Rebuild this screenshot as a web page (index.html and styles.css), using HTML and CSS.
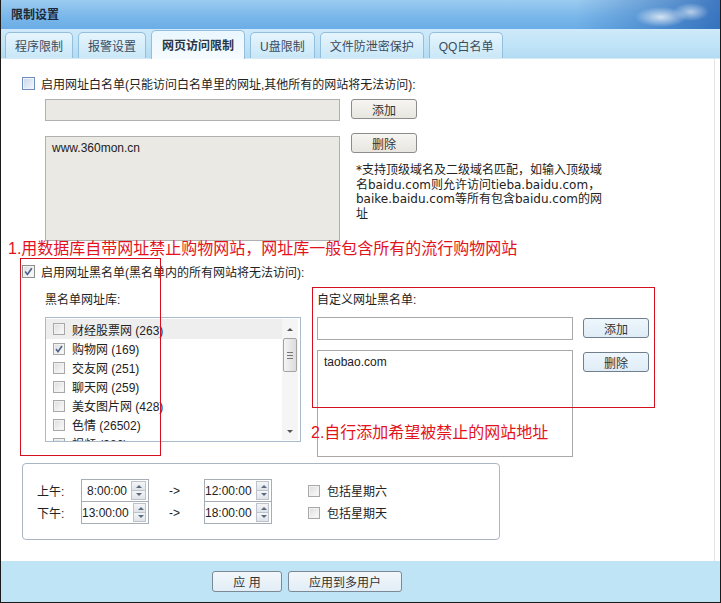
FILE: index.html
```html
<!DOCTYPE html>
<html lang="zh-CN">
<head>
    <meta charset="UTF-8">
    <title>限制设置</title>
    <link rel="stylesheet" href="styles.css">
</head>
<body>
<div class="window">
    <div class="titlebar">限制设置</div>

    <div class="tabstrip">
        <div class="tab">程序限制</div>
        <div class="tab">报警设置</div>
        <div class="tab active">网页访问限制</div>
        <div class="tab">U盘限制</div>
        <div class="tab">文件防泄密保护</div>
        <div class="tab">QQ白名单</div>
    </div>

    <div class="panel">
        <div class="check-row">
            <span class="cb cb-blue"></span>
            <span>启用网址白名单(只能访问白名单里的网址,其他所有的网站将无法访问):</span>
        </div>

        <div class="wl-body">
            <div class="wl-fields">
                <div class="field disabled"></div>
                <div class="area disabled wl-area">www.360mon.cn</div>
            </div>
            <div class="wl-side">
                <button class="btn btn-grey">添加</button>
                <button class="btn btn-grey btn-del">删除</button>
                <p class="note">*支持顶级域名及二级域名匹配，如输入顶级域名baidu.com则允许访问tieba.baidu.com，baike.baidu.com等所有包含baidu.com的网址</p>
            </div>
        </div>

        <div class="check-row bl-head">
            <span class="cb checked">
                <svg viewBox="0 0 11 11" width="11" height="11"><path d="M2.2 5.6 L4.4 8.4 L8.8 2.2" fill="none" stroke="#4a5e88" stroke-width="1.6"/></svg>
            </span>
            <span>启用网址黑名单(黑名单内的所有网站将无法访问):</span>
        </div>

        <div class="bl-body">
            <div class="bl-lib">
                <div class="caption">黑名单网址库:</div>
                <div class="listbox">
                    <div class="list-items">
                        <div class="item selected"><span class="cb cb-sm"></span>财经股票网 (263)</div>
                        <div class="item"><span class="cb cb-sm checked">
                            <svg viewBox="0 0 10 10" width="10" height="10"><path d="M2 5 L4 7.8 L8 2" fill="none" stroke="#4a5e88" stroke-width="1.5"/></svg>
                        </span>购物网 (169)</div>
                        <div class="item"><span class="cb cb-sm"></span>交友网 (251)</div>
                        <div class="item"><span class="cb cb-sm"></span>聊天网 (259)</div>
                        <div class="item"><span class="cb cb-sm"></span>美女图片网 (428)</div>
                        <div class="item"><span class="cb cb-sm"></span>色情 (26502)</div>
                        <div class="item"><span class="cb cb-sm"></span>视频 (386)</div>
                    </div>
                    <div class="scrollbar">
                        <span class="arrow arrow-up"></span>
                        <span class="thumb"><i></i><i></i><i></i></span>
                        <span class="arrow arrow-down"></span>
                    </div>
                </div>
            </div>

            <div class="bl-custom">
                <div class="caption">自定义网址黑名单:</div>
                <div class="custom-grid">
                    <div class="custom-fields">
                        <div class="field"></div>
                        <div class="area bl-area">taobao.com</div>
                    </div>
                    <div class="custom-side">
                        <button class="btn btn-blue">添加</button>
                        <button class="btn btn-blue btn-del2">删除</button>
                    </div>
                </div>
            </div>
        </div>

        <div class="timebox">
            <div class="time-row">
                <span class="time-label">上午:</span>
                <div class="spin"><span class="spin-val">8:00:00</span><span class="spin-btns"><i class="up"></i><i class="down"></i></span></div>
                <span class="time-arrow">-&gt;</span>
                <div class="spin"><span class="spin-val">12:00:00</span><span class="spin-btns"><i class="up"></i><i class="down"></i></span></div>
                <span class="cb cb-sm time-cb"></span><span>包括星期六</span>
            </div>
            <div class="time-row">
                <span class="time-label">下午:</span>
                <div class="spin"><span class="spin-val">13:00:00</span><span class="spin-btns"><i class="up"></i><i class="down"></i></span></div>
                <span class="time-arrow">-&gt;</span>
                <div class="spin"><span class="spin-val">18:00:00</span><span class="spin-btns"><i class="up"></i><i class="down"></i></span></div>
                <span class="cb cb-sm time-cb"></span><span>包括星期天</span>
            </div>
        </div>
    </div>

    <div class="footer">
        <button class="btn btn-foot btn-apply">应 用</button>
        <button class="btn btn-foot btn-multi">应用到多用户</button>
    </div>

    <!-- annotations drawn over the screenshot -->
    <div class="note-red note-red1">1.用数据库自带网址禁止购物网站，网址库一般包含所有的流行购物网站</div>
    <div class="mark mark1"></div>
    <div class="mark mark2"></div>
    <div class="note-red note-red2">2.自行添加希望被禁止的网站地址</div>
</div>
</body>
</html>
```

FILE: styles.css
```css
body {
    margin: 0;
    background: #fff;
    font-family: "Liberation Sans", "Noto Sans CJK SC", sans-serif;
    font-size: 12px;
    color: #222;
}
.window {
    position: relative;
    width: 721px;
    height: 603px;
    box-sizing: border-box;
    border: 1px solid #1b1b1b;
    border-top: none;
    display: flex;
    flex-direction: column;
    overflow: hidden;
}
.titlebar {
    height: 29px;
    line-height: 30px;
    padding-left: 10px;
    font-weight: bold;
    color: #1c2838;
    background:
        radial-gradient(ellipse 26px 10px at 660px 17px, rgba(255,255,255,.75), rgba(255,255,255,0)),
        radial-gradient(ellipse 18px 9px at 690px 12px, rgba(255,255,255,.6), rgba(255,255,255,0)),
        linear-gradient(to right, rgba(40,100,180,0) 80%, rgba(40,100,180,.8) 100%),
        linear-gradient(#9ccbf0, #78b6e9 60%, #6badE6);
}
.tabstrip {
    height: 29px;
    display: flex;
    align-items: flex-end;
    gap: 5px;
    padding-left: 4px;
    background: linear-gradient(#cfeafa, #bfe3f7 60%, #b2dbf3);
    border-bottom: 1px solid #d7e9f4;
}
.tab {
    height: 26px;
    line-height: 28px;
    padding: 0 9px;
    box-sizing: border-box;
    border: 1px solid #93bedc;
    border-bottom: none;
    border-radius: 5px 5px 0 0;
    background: linear-gradient(#e6f5fd, #c9e7f7);
    color: #3b4b5e;
}
.tab.active {
    height: 29px;
    line-height: 30px;
    padding: 0 10px;
    margin-bottom: -1px;
    font-weight: bold;
    color: #2a3646;
    background: linear-gradient(#eaf7fe, #f6fbfe);
}
.panel {
    flex: 1;
    padding: 15px 0 0 21px;
    border-right: 1px solid #e4e4e4;
    margin-right: 5px;
}
.check-row {
    display: flex;
    align-items: center;
    height: 18px;
}
.check-row .cb {
    margin-right: 6px;
}
.cb {
    display: inline-flex;
    align-items: center;
    justify-content: center;
    width: 13px;
    height: 13px;
    box-sizing: border-box;
    border: 1px solid #8e8f8f;
    background: linear-gradient(135deg, #dcdcdc, #fdfdfd);
    box-shadow: inset 0 0 0 1px #f2f2f2;
    flex: none;
}
.cb-blue {
    border-color: #6f90bd;
    background: linear-gradient(135deg, #c9d7ea, #f3f7fc);
}
.cb-sm {
    width: 12px;
    height: 12px;
    border-color: #a8a8a8;
}
.wl-body {
    display: flex;
    margin: 7px 0 0 23px;
}
.wl-fields {
    width: 295px;
}
.field {
    height: 22px;
    box-sizing: border-box;
    border: 1px solid #a9a9a9;
    background: #fff;
}
.area {
    box-sizing: border-box;
    border: 1px solid #a9a9a9;
    background: #fff;
    padding: 4px 6px;
    line-height: 15px;
}
.disabled {
    background: #ebe9e4;
    border-color: #b0b0b0;
}
.wl-area {
    height: 105px;
    margin-top: 15px;
    padding-top: 4px;
}
.wl-side {
    margin-left: 11px;
    display: flex;
    flex-direction: column;
    align-items: flex-start;
}
.btn {
    font-family: inherit;
    font-size: 12px;
    color: #333;
    height: 20px;
    width: 66px;
    padding: 0;
    border-radius: 3px;
    cursor: pointer;
}
.btn-grey {
    border: 1px solid #8d8d8d;
    background: linear-gradient(#f6f5f1, #e8e6df);
}
.btn-del {
    margin-top: 14px;
}
.note {
    margin: 10px 0 0 5px;
    width: 252px;
    line-height: 14.5px;
    color: #222;
    font-family: "DejaVu Sans", "Noto Sans CJK SC", sans-serif;
}
.bl-head {
    margin-top: 21px;
}
.bl-body {
    display: flex;
    margin: 12px 0 0 23px;
}
.caption {
    height: 16px;
    line-height: 16px;
    margin-bottom: 9px;
}
.bl-lib {
    width: 256px;
}
.listbox {
    height: 125px;
    box-sizing: border-box;
    border: 1px solid #a8bacb;
    display: flex;
    overflow: hidden;
}
.list-items {
    flex: 1;
    padding-top: 1px;
}
.item {
    height: 19px;
    display: flex;
    align-items: center;
    padding-left: 7px;
    white-space: nowrap;
}
.item .cb {
    margin-right: 7px;
}
.item.selected {
    background: #eeeeee;
    height: 20px;
}
.scrollbar {
    width: 16px;
    margin: 1px 2px 1px 0;
    display: flex;
    flex-direction: column;
    align-items: center;
    background: #f5f5f5;
}
.arrow {
    width: 0;
    height: 0;
    border-left: 3px solid transparent;
    border-right: 3px solid transparent;
}
.arrow-up {
    margin-top: 9px;
    border-bottom: 3px solid #555;
}
.arrow-down {
    margin-top: auto;
    margin-bottom: 7px;
    border-top: 3px solid #555;
}
.thumb {
    margin-top: 7px;
    width: 14px;
    height: 34px;
    box-sizing: border-box;
    border: 1px solid #a3a3a3;
    border-radius: 2px;
    background: linear-gradient(to right, #f4f4f4, #dcdcdc);
    display: flex;
    flex-direction: column;
    align-items: center;
    justify-content: center;
    gap: 2px;
}
.thumb i {
    display: block;
    width: 6px;
    height: 1px;
    background: #777;
}
.bl-custom {
    margin-left: 16px;
}
.custom-grid {
    display: flex;
}
.custom-fields {
    width: 256px;
}
.custom-fields .field {
    height: 23px;
}
.bl-area {
    height: 107px;
    margin-top: 10px;
    padding-top: 4px;
}
.custom-side {
    margin-left: 10px;
    display: flex;
    flex-direction: column;
}
.btn-blue {
    border: 1px solid #707f8e;
    background: linear-gradient(#eef6fc, #dfecf7);
    height: 20px;
    margin-top: 1px;
}
.btn-del2 {
    margin-top: 14px;
}
.timebox {
    width: 478px;
    height: 77px;
    box-sizing: border-box;
    margin-top: 6px;
    border: 1px solid #aab6c4;
    border-radius: 4px;
    padding: 15px 0 0 14px;
}
.time-row {
    display: flex;
    align-items: center;
    height: 23px;
}
.time-label {
    width: 44px;
}
.spin {
    width: 68px;
    height: 23px;
    box-sizing: border-box;
    border: 1px solid #a6adb6;
    display: flex;
    align-items: center;
}
.spin-val {
    flex: 1;
    text-align: right;
    padding-right: 4px;
}
.spin-btns {
    width: 15px;
    height: 19px;
    margin-right: 2px;
    display: flex;
    flex-direction: column;
}
.spin-btns i {
    flex: 1;
    border: 1px solid #bcc3cc;
    background: linear-gradient(#f4f5f7, #dfe3e8);
    position: relative;
}
.spin-btns i + i {
    border-top: none;
}
.spin-btns i::after {
    content: "";
    position: absolute;
    left: 4px;
    top: 3px;
    border-left: 3px solid transparent;
    border-right: 3px solid transparent;
}
.spin-btns .up::after {
    border-bottom: 3px solid #5a6b7e;
}
.spin-btns .down::after {
    top: 2px;
    border-top: 3px solid #5a6b7e;
}
.time-arrow {
    width: 35px;
    padding-left: 20px;
    box-sizing: border-box;
    margin-right: 20px;
}
.time-row + .time-row {
    margin-top: -1px;
}
.time-cb {
    margin: 0 7px 0 36px;
}
.footer {
    height: 41px;
    background: #bee4f6;
    display: flex;
    align-items: flex-start;
    padding: 10px 0 0 211px;
    box-sizing: border-box;
    gap: 6px;
}
.btn-foot {
    border: 1px solid #7b8896;
    background: linear-gradient(#f2f7fb, #e2edf6);
    height: 21px;
}
.btn-apply {
    width: 70px;
}
.btn-multi {
    width: 114px;
}
.note-red {
    position: absolute;
    font-size: 16px;
    color: #e3121c;
    white-space: nowrap;
    font-family: "Liberation Sans", "Noto Sans CJK SC", sans-serif;
}
.note-red1 {
    left: 7px;
    top: 235px;
}
.note-red2 {
    left: 310px;
    top: 419px;
}
.mark {
    position: absolute;
    border: 1px solid #d2101e;
}
.mark1 {
    left: 19px;
    top: 258px;
    width: 139px;
    height: 196px;
}
.mark2 {
    left: 311px;
    top: 287px;
    width: 341px;
    height: 119px;
}
```
